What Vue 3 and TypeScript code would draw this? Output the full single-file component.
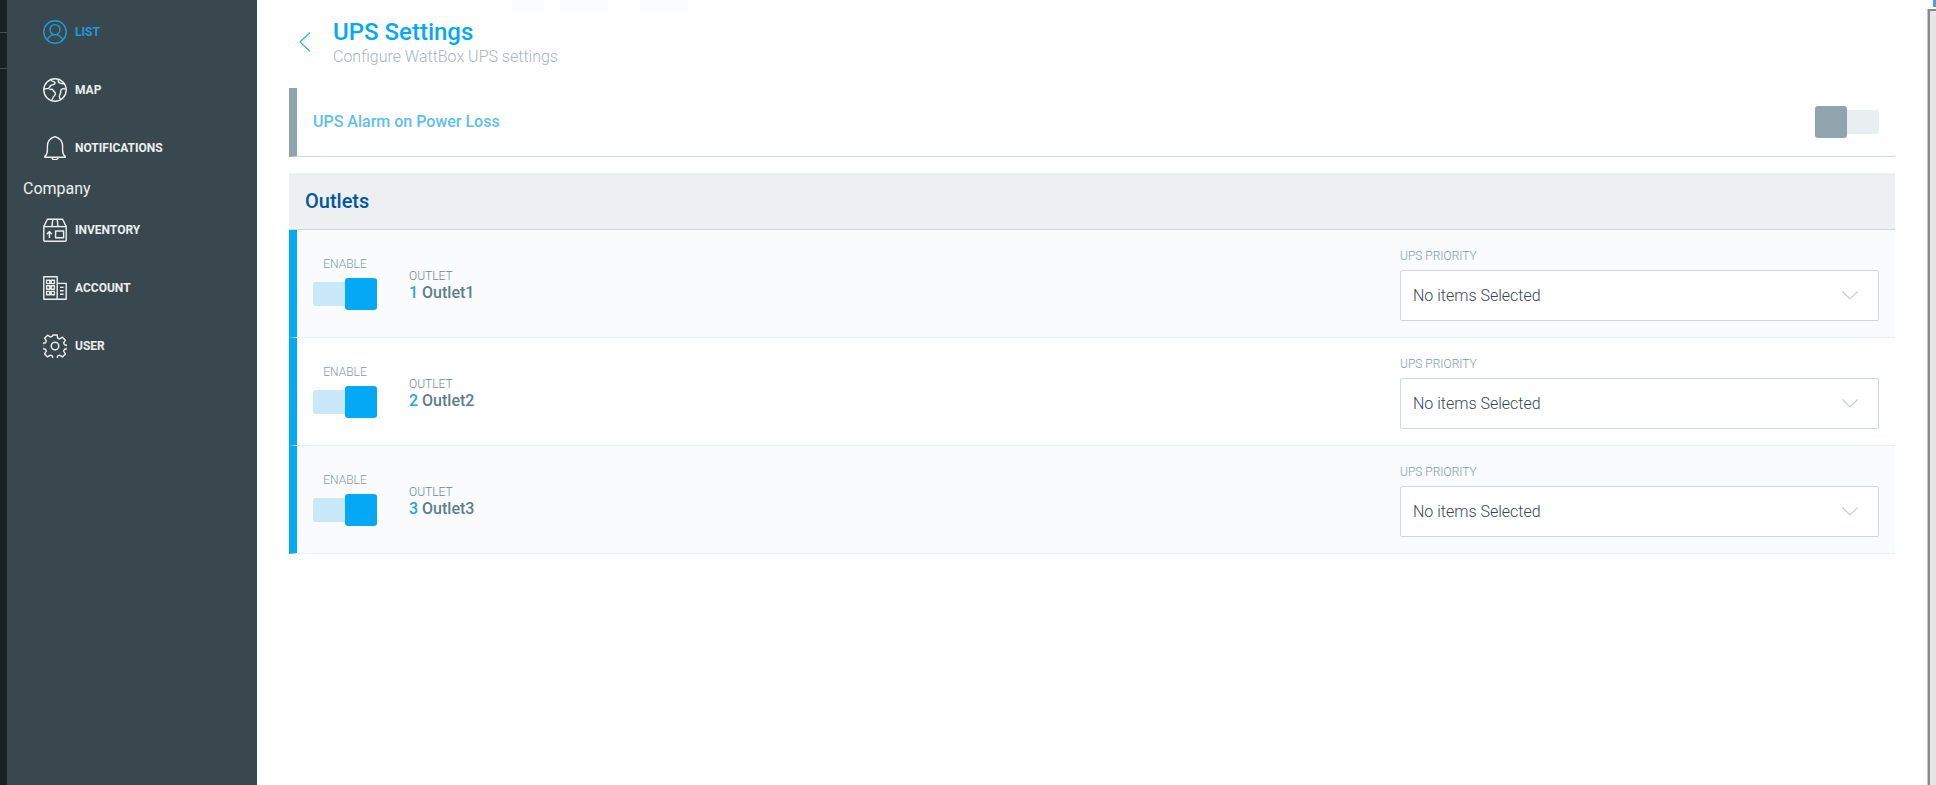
<template>
  <div class="page">
    <div class="edge">
      <div class="edge-tab"></div>
      <div class="edge-tab short"></div>
    </div>

    <aside class="sidebar">
      <nav class="nav">
        <a v-for="item in topNav" :key="item.label" class="nav-item" :class="{ active: item.active }">
          <NavIcon :name="item.icon" />
          <span>{{ item.label }}</span>
        </a>
      </nav>
      <div class="nav-title">Company</div>
      <nav class="nav">
        <a v-for="item in companyNav" :key="item.label" class="nav-item">
          <NavIcon :name="item.icon" />
          <span>{{ item.label }}</span>
        </a>
      </nav>
    </aside>

    <main class="main">
      <div class="ghost-row">
        <i class="g1"></i><i class="g2"></i><i class="g3"></i>
      </div>

      <header class="head">
        <svg class="back" viewBox="0 0 12 20" fill="none">
          <path d="M11 .5 1 10l10 9.5" stroke="#29b0ef" stroke-width="1.2" />
        </svg>
        <div>
          <h1>UPS Settings</h1>
          <p>Configure WattBox UPS settings</p>
        </div>
      </header>

      <section class="alarm">
        <span class="alarm-label">UPS Alarm on Power Loss</span>
        <div class="toggle off"><b></b></div>
      </section>

      <section class="outlets">
        <h2>Outlets</h2>
        <div v-for="o in outlets" :key="o.id" class="row">
          <div class="enable">
            <label>ENABLE</label>
            <div class="toggle on"><b></b></div>
          </div>
          <div class="outlet">
            <label>OUTLET</label>
            <div class="outlet-name"><em>{{ o.id }}</em> {{ o.name }}</div>
          </div>
          <div class="priority">
            <label>UPS PRIORITY</label>
            <div class="select">
              <span>No items Selected</span>
              <svg viewBox="0 0 16 9" fill="none">
                <path d="M.5.5 8 8l7.5-7.5" stroke="#c3ced3" stroke-width="1.2" />
              </svg>
            </div>
          </div>
        </div>
      </section>
    </main>

    <div class="frame">
      <div class="frame-top"><i></i></div>
      <div class="frame-body"></div>
    </div>
  </div>
</template>

<script setup lang="ts">
import { defineComponent, h } from 'vue'

type IconName = 'user' | 'globe' | 'bell' | 'box' | 'building' | 'gear'

interface NavEntry {
  label: string
  icon: IconName
  active?: boolean
}

const icons: Record<IconName, string[]> = {
  user: [
    'M12 .8a11.2 11.2 0 1 0 0 22.4a11.2 11.2 0 1 0 0-22.4Z',
    'M12 4.6a5 5 0 1 0 0 10a5 5 0 1 0 0-10Z',
    'M4.2 20c1.4-3.4 4.4-5.4 7.8-5.4s6.4 2 7.8 5.4',
  ],
  globe: [
    'M12 .8a11.2 11.2 0 1 0 0 22.4a11.2 11.2 0 1 0 0-22.4Z',
    'M8 1.6c.3 1.6 1.6 1.8 3 2.2c1.2.4 1.4 1.6.4 2.4c-1.2 1-2.6.4-3.8 1.4c-1.2 1-.6 2.2-2 2.8c-1.4.6-3.4-.2-4.6 1',
    'M6.4 11.6c1.6-.6 3.4-.4 4 1c.5 1.4 1.6 1.6 2 2.8c.4 1.4-1 2.2-1.8 3.2c-.8 1-1 2.6-2 3.6',
    'M15.4 2c-.6 1.6.2 2.6 1.6 3.2c1.4.6 2.6-.2 4 .8',
    'M22.4 11c-1.6-.6-3.2-.4-4.2.8c-1 1.2-.2 2.4-.8 3.8c-.5 1.2-1.4 2-1 3.6c.1.8.6 1.4 1 2',
  ],
  bell: [
    'M1.8 20.4c2.2-1.8 2.6-3.2 2.6-6.2V10c0-4.6 3.2-8 7.6-9.4c4.4 1.4 7.6 4.8 7.6 9.4v4.2c0 3 .4 4.4 2.6 6.2v.8H1.8Z',
    'M9 21.2a3 2.6 0 0 0 6 0',
  ],
  box: [
    'M.8 22.2a1 1 0 0 0 1 1h20.4a1 1 0 0 0 1-1V8.6L19.6 1.2H4.4L.8 8.6Z',
    'M.8 8.6h22.4',
    'M9.8 1.2 9 8.6M14.2 1.2l.8 7.4',
    'M12.6 13h8v6.8h-8Z',
    'M6.4 20v-6.2M3.8 16.2l2.6-2.6 2.6 2.6',
  ],
  building: [
    'M.8 23.2V.8h13.4v22.4Z',
    'M14.2 7.4h9v15.8h-9',
    'M3.6 4.2h3.2v3.4H3.6ZM8.2 4.2h3.2v3.4H8.2ZM3.6 9.8h3.2v3.4H3.6ZM8.2 9.8h3.2v3.4H8.2ZM3.6 15.4h3.2v3.4H3.6ZM8.2 15.4h3.2v3.4H8.2Z',
    'M17 11.4h3.6M17 14.8h3.6M17 18.2h3.6',
  ],
  gear: [
    'M9.9 1h4.2l.6 3.1 2 .9 2.7-1.8 3 3-1.8 2.6.9 2 3 .6v3.2l-3 .6-.9 2 1.8 2.7-3 3-2.7-1.8-2 .8-.6 3.1H9.9l-.6-3.1-2-.8-2.7 1.8-3-3 1.8-2.7-.9-2-3-.6V9.4l3-.6.9-2-1.8-2.6 3-3 2.7 1.8 2-.9Z',
    'M12 8.2a3.8 3.8 0 1 0 0 7.6a3.8 3.8 0 1 0 0-7.6Z',
  ],
}

const NavIcon = defineComponent({
  props: { name: { type: String, required: true } },
  setup(props) {
    return () =>
      h(
        'svg',
        {
          class: 'nav-icon',
          viewBox: '0 0 24 24',
          width: 24,
          height: 24,
          fill: 'none',
          stroke: 'currentColor',
          'stroke-width': 1.4,
          'stroke-linejoin': 'round',
        },
        icons[props.name as IconName].map((d) => h('path', { d })),
      )
  },
})

const topNav: NavEntry[] = [
  { label: 'LIST', icon: 'user', active: true },
  { label: 'MAP', icon: 'globe' },
  { label: 'NOTIFICATIONS', icon: 'bell' },
]

const companyNav: NavEntry[] = [
  { label: 'INVENTORY', icon: 'box' },
  { label: 'ACCOUNT', icon: 'building' },
  { label: 'USER', icon: 'gear' },
]

const outlets = [
  { id: 1, name: 'Outlet1' },
  { id: 2, name: 'Outlet2' },
  { id: 3, name: 'Outlet3' },
]
</script>

<style>
html,
body {
  margin: 0;
  background: #fff;
  overflow: hidden;
}
</style>

<style scoped>
.page {
  display: flex;
  height: 785px;
  font-family: Roboto, 'Liberation Sans', sans-serif;
  overflow: hidden;
}

.edge {
  width: 7px;
  flex: none;
  background: #1c1f24;
}

.edge-tab {
  height: 32px;
  border-bottom: 1px solid #4a4d52;
}

.edge-tab.short {
  height: 35px;
}

.sidebar {
  width: 250px;
  flex: none;
  padding-top: 3px;
  background: #39484f;
  box-sizing: border-box;
}

.nav-item {
  display: flex;
  align-items: center;
  gap: 8px;
  height: 58px;
  padding-left: 36px;
  color: #eceff1;
  font-size: 12px;
  font-weight: 700;
}

.nav-item.active {
  color: #1b9cd8;
}

.nav-title {
  height: 22px;
  line-height: 22px;
  margin-top: 1px;
  margin-bottom: 1px;
  padding-left: 16px;
  color: #eceff1;
  font-size: 16px;
}

.main {
  flex: 1;
  min-width: 0;
  padding: 0 33px 0 32px;
}

.ghost-row {
  display: flex;
  height: 12px;
  padding-left: 223px;
}

.ghost-row i {
  background: #fbfcfe;
}

.g1 {
  width: 32px;
  margin-right: 16px;
}

.g2,
.g3 {
  width: 48px;
  margin-right: 32px;
}

.head {
  display: flex;
  align-items: center;
  height: 76px;
  padding-left: 10px;
  padding-bottom: 15px;
  box-sizing: border-box;
}

.back {
  width: 12px;
  height: 20px;
  margin-right: 22px;
  margin-bottom: 1px;
}

h1 {
  margin: 0 0 1px;
  color: #03a9f4;
  font-size: 24px;
  font-weight: 500;
  line-height: 28px;
}

.head p {
  margin: 0;
  color: #a9b5bb;
  font-size: 16px;
  font-weight: 300;
  line-height: 20px;
}

.alarm {
  display: flex;
  align-items: center;
  justify-content: space-between;
  height: 69px;
  padding: 0 16px;
  border-left: 8px solid #90a4ae;
  border-bottom: 1px solid #cfd8dc;
  box-sizing: border-box;
}

.alarm-label {
  padding-bottom: 2px;
  color: #5cc0ef;
  font-size: 16px;
  font-weight: 500;
}

.toggle {
  position: relative;
  width: 64px;
  height: 24px;
  margin: 4px 0;
  border-radius: 3px;
}

.toggle b {
  position: absolute;
  top: -4px;
  width: 32px;
  height: 32px;
  border-radius: 3px;
}

.toggle.on {
  background: #c9e9fb;
}

.toggle.on b {
  right: 0;
  background: #03a9f4;
}

.toggle.off {
  background: #e9eef0;
}

.toggle.off b {
  left: 0;
  background: #90a4ae;
}

.outlets {
  margin-top: 16px;
}

h2 {
  height: 57px;
  margin: 0;
  padding-left: 16px;
  background: #edeff1;
  border-bottom: 1px solid #cfd8dc;
  box-sizing: border-box;
  color: #01579b;
  font-size: 20px;
  font-weight: 500;
  line-height: 56px;
}

.row {
  display: flex;
  align-items: center;
  height: 108px;
  padding: 0 16px;
  border-left: 8px solid #03a9f4;
  border-bottom: 1px solid #eceff1;
  box-sizing: border-box;
  background: #fff;
}

.row:nth-child(even) {
  background: #f9fbfd;
}

label {
  display: block;
  color: #849aa5;
  font-size: 12px;
  font-weight: 300;
  line-height: 14px;
}

.enable {
  width: 64px;
  text-align: center;
}

.enable label {
  margin-bottom: 11px;
}

.outlet {
  margin-left: 32px;
  padding-top: 3px;
}

.outlet label {
  color: #6f8894;
}

.outlet-name {
  margin-top: 1px;
  color: #607d8b;
  font-size: 16px;
  font-weight: 500;
  line-height: 18px;
}

.outlet-name em {
  color: #21a5e6;
  font-style: normal;
}

.priority {
  width: 479px;
  margin-left: auto;
  padding-top: 3px;
}

.priority label {
  margin-bottom: 7px;
}

.select {
  display: flex;
  align-items: center;
  justify-content: space-between;
  height: 51px;
  padding: 0 20px 0 12px;
  background: #fff;
  border: 1px solid #cfd8dc;
  border-radius: 2px;
  box-sizing: border-box;
  color: #37474f;
  font-size: 16px;
  font-weight: 300;
}

.select svg {
  width: 16px;
  height: 9px;
}

.frame {
  display: flex;
  flex-direction: column;
  width: 8px;
  flex: none;
}

.frame-top {
  display: flex;
  justify-content: flex-end;
  height: 9px;
}

.frame-top i {
  width: 3px;
  height: 7px;
  background: #5a9bdc;
}

.frame-body {
  flex: 1;
  background: #e6e6e6;
  border-top: 2px solid #8a8a8a;
  border-left: 2px solid #8a8a8a;
  box-shadow: -1px 0 0 #c8c8c8;
}
</style>
